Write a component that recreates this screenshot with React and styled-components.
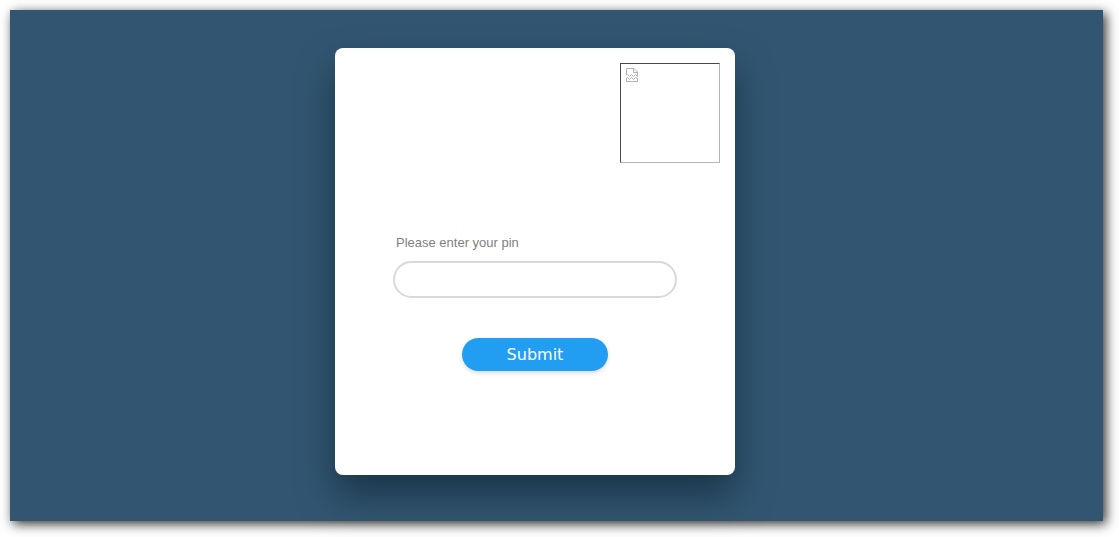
import React from 'react';
import styled, { createGlobalStyle } from 'styled-components';

const GlobalStyle = createGlobalStyle`
  * { box-sizing: border-box; }
  body { margin: 0; background: #fff; overflow: hidden; }
`;

const Page = styled.div`
  height: 537px;
  padding: 10px 16px 16px 10px;
`;

const Backdrop = styled.main`
  height: 511px;
  padding: 38px 43px 0 0;
  display: flex;
  justify-content: center;
  align-items: flex-start;
  background: #325672;
  box-shadow: 3px 3px 11px rgba(0, 0, 0, 0.82);
`;

const Card = styled.form`
  width: 400px;
  height: 427px;
  padding: 15px 15px 0;
  display: flex;
  flex-direction: column;
  align-items: center;
  background: #fff;
  border-radius: 8px;
  box-shadow: 0 20px 36px rgba(4, 24, 32, 0.5);
`;

const Picture = styled.div`
  width: 100px;
  height: 100px;
  padding: 4px 5px;
  align-self: flex-end;
  border: 1px solid;
  border-color: #484848 #b4b4b4 #b4b4b4 #484848;
`;

const BrokenIcon = styled.svg`
  display: block;
  width: 12px;
  height: 14px;
  fill: none;
  stroke: #b0b0b0;
`;

const Field = styled.div`
  width: 284px;
  margin-top: 71px;
  display: flex;
  flex-direction: column;
`;

const Label = styled.label`
  padding-left: 3px;
  font: 13px/18px "Liberation Sans", Arial, sans-serif;
  color: #808080;
`;

const PinInput = styled.input`
  height: 37px;
  margin-top: 9px;
  padding: 0 16px;
  border: 2px solid #dad9da;
  border-radius: 19px;
  background: #fff;
  outline: none;
  font: 14px "Liberation Sans", Arial, sans-serif;
`;

const Submit = styled.button`
  width: 146px;
  height: 33px;
  margin-top: 40px;
  padding: 0;
  border: 0;
  border-radius: 17px;
  background: #219ef2;
  box-shadow: 0 2px 4px rgba(40, 20, 70, 0.17);
  color: #fff;
  font: 16px/33px "DejaVu Sans", sans-serif;
`;

export default function App() {
  return (
    <>
      <GlobalStyle />
      <Page>
        <Backdrop>
          <Card onSubmit={(e) => e.preventDefault()}>
            <Picture>
              <BrokenIcon viewBox="0 0 12 14" aria-hidden="true">
                <path d="M.5 7V.5H8L11.5 4V8.5M7.5 .5V4.5H11.5" />
                <path d="M.5 6.5H1.5L3.5 8.5L5.5 6.5L7.5 8.5L9.5 6.5L11.5 8.5" />
                <path d="M.5 10V13.5H11.5V10.5L9.5 9.5L7.5 11.5L5.5 9.5L3.5 11.5L1.5 9.5L.5 10" />
              </BrokenIcon>
            </Picture>
            <Field>
              <Label htmlFor="pin">Please enter your pin</Label>
              <PinInput id="pin" type="password" />
            </Field>
            <Submit type="submit">Submit</Submit>
          </Card>
        </Backdrop>
      </Page>
    </>
  );
}
